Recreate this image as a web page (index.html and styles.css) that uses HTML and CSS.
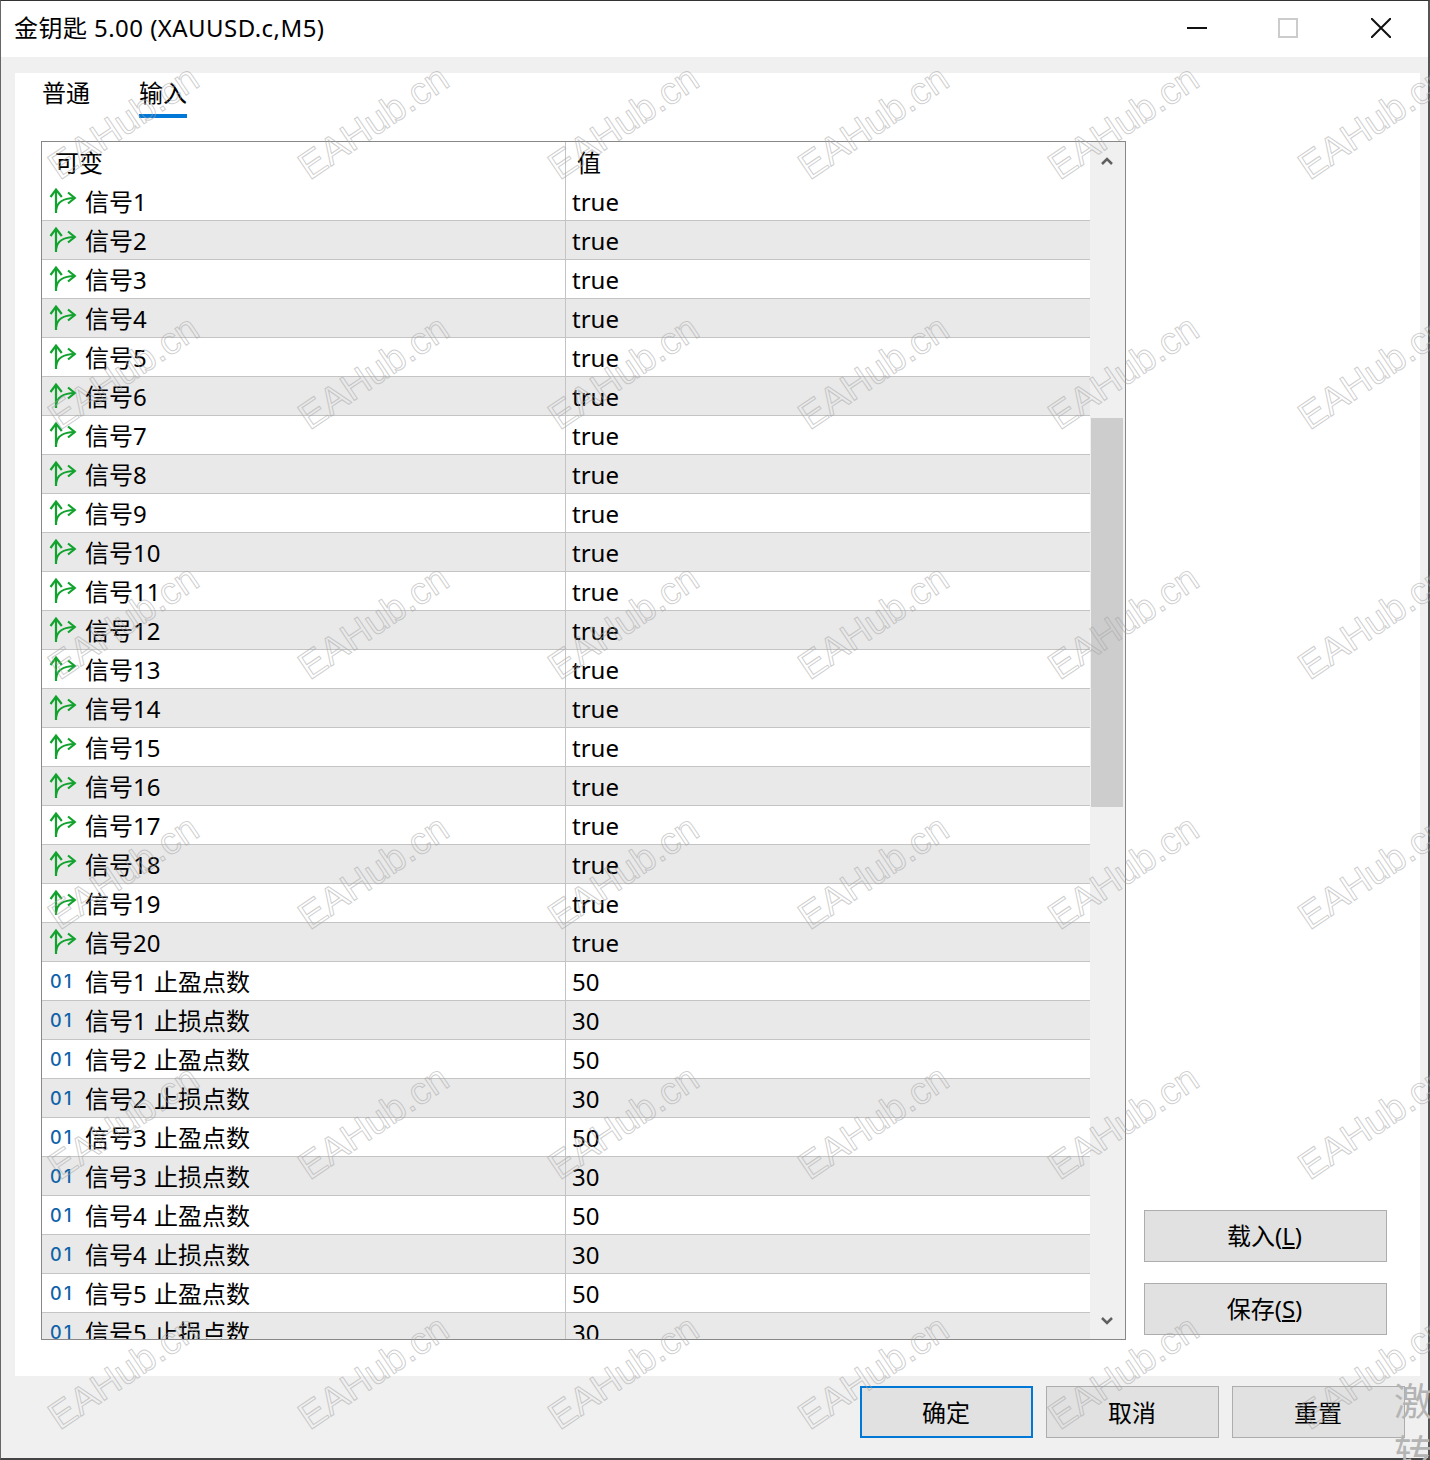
FILE: index.html
```html
<!DOCTYPE html>
<html lang="zh-CN">
<head>
<meta charset="utf-8">
<title>金钥匙 5.00 (XAUUSD.c,M5)</title>
<link rel="stylesheet" href="styles.css">
</head>
<body>
<svg class="defs" width="0" height="0" aria-hidden="true">
  <symbol id="branch" viewBox="0 0 30 38">
    <g fill="none" stroke="#12a32e" stroke-width="2.200">
      <path d="M8 30V7"/>
      <path d="M2.500 14 8 6.500l5.800 7.500"/>
      <path d="M8 27C9 20 15 15 26.500 15"/>
      <path d="M20 9.500 26.800 15 20 20.500"/>
    </g>
  </symbol>
</svg>
<div class="window">
  <header class="titlebar">
    <span class="title">金钥匙 5.00 (XAUUSD.c,M5)</span>
    <div class="controls">
      <span class="ctl ctl-min"></span>
      <span class="ctl ctl-max"></span>
      <svg class="ctl" viewBox="0 0 20 20"><path d="M0 0 20 20M20 0 0 20" stroke="#111" stroke-width="2" fill="none"/></svg>
    </div>
  </header>
  <main class="content">
    <section class="panel">
      <nav class="tabs">
        <span class="tab">普通</span>
        <span class="tab tab-active">输入</span>
      </nav>
      <div class="body">
        <div class="listbox">
          <div class="list">
            <div class="head"><span class="hcell hname">可变</span><span class="hcell hval">值</span></div>
            <div class="row"><div class="name"><svg class="ico"><use href="#branch"/></svg>信号1</div><div class="val">true</div></div>
            <div class="row alt"><div class="name"><svg class="ico"><use href="#branch"/></svg>信号2</div><div class="val">true</div></div>
            <div class="row"><div class="name"><svg class="ico"><use href="#branch"/></svg>信号3</div><div class="val">true</div></div>
            <div class="row alt"><div class="name"><svg class="ico"><use href="#branch"/></svg>信号4</div><div class="val">true</div></div>
            <div class="row"><div class="name"><svg class="ico"><use href="#branch"/></svg>信号5</div><div class="val">true</div></div>
            <div class="row alt"><div class="name"><svg class="ico"><use href="#branch"/></svg>信号6</div><div class="val">true</div></div>
            <div class="row"><div class="name"><svg class="ico"><use href="#branch"/></svg>信号7</div><div class="val">true</div></div>
            <div class="row alt"><div class="name"><svg class="ico"><use href="#branch"/></svg>信号8</div><div class="val">true</div></div>
            <div class="row"><div class="name"><svg class="ico"><use href="#branch"/></svg>信号9</div><div class="val">true</div></div>
            <div class="row alt"><div class="name"><svg class="ico"><use href="#branch"/></svg>信号10</div><div class="val">true</div></div>
            <div class="row"><div class="name"><svg class="ico"><use href="#branch"/></svg>信号11</div><div class="val">true</div></div>
            <div class="row alt"><div class="name"><svg class="ico"><use href="#branch"/></svg>信号12</div><div class="val">true</div></div>
            <div class="row"><div class="name"><svg class="ico"><use href="#branch"/></svg>信号13</div><div class="val">true</div></div>
            <div class="row alt"><div class="name"><svg class="ico"><use href="#branch"/></svg>信号14</div><div class="val">true</div></div>
            <div class="row"><div class="name"><svg class="ico"><use href="#branch"/></svg>信号15</div><div class="val">true</div></div>
            <div class="row alt"><div class="name"><svg class="ico"><use href="#branch"/></svg>信号16</div><div class="val">true</div></div>
            <div class="row"><div class="name"><svg class="ico"><use href="#branch"/></svg>信号17</div><div class="val">true</div></div>
            <div class="row alt"><div class="name"><svg class="ico"><use href="#branch"/></svg>信号18</div><div class="val">true</div></div>
            <div class="row"><div class="name"><svg class="ico"><use href="#branch"/></svg>信号19</div><div class="val">true</div></div>
            <div class="row alt"><div class="name"><svg class="ico"><use href="#branch"/></svg>信号20</div><div class="val">true</div></div>
            <div class="row"><div class="name"><span class="num">01</span>信号1 止盈点数</div><div class="val">50</div></div>
            <div class="row alt"><div class="name"><span class="num">01</span>信号1 止损点数</div><div class="val">30</div></div>
            <div class="row"><div class="name"><span class="num">01</span>信号2 止盈点数</div><div class="val">50</div></div>
            <div class="row alt"><div class="name"><span class="num">01</span>信号2 止损点数</div><div class="val">30</div></div>
            <div class="row"><div class="name"><span class="num">01</span>信号3 止盈点数</div><div class="val">50</div></div>
            <div class="row alt"><div class="name"><span class="num">01</span>信号3 止损点数</div><div class="val">30</div></div>
            <div class="row"><div class="name"><span class="num">01</span>信号4 止盈点数</div><div class="val">50</div></div>
            <div class="row alt"><div class="name"><span class="num">01</span>信号4 止损点数</div><div class="val">30</div></div>
            <div class="row"><div class="name"><span class="num">01</span>信号5 止盈点数</div><div class="val">50</div></div>
            <div class="row alt"><div class="name"><span class="num">01</span>信号5 止损点数</div><div class="val">30</div></div>
          </div>
          <div class="scrollbar">
            <svg class="arrow arrow-up" viewBox="0 0 12 8"><path d="M1 7 6 2l5 5" fill="none" stroke="#606060" stroke-width="2.500"/></svg>
            <div class="track"><div class="thumb"></div></div>
            <svg class="arrow arrow-down" viewBox="0 0 12 8"><path d="M1 1l5 5 5-5" fill="none" stroke="#606060" stroke-width="2.500"/></svg>
          </div>
        </div>
        <aside class="side">
          <button class="btn btn-side">载入(<u>L</u>)</button>
          <button class="btn btn-side">保存(<u>S</u>)</button>
        </aside>
      </div>
    </section>
    <footer class="footer">
      <button class="btn btn-foot btn-primary">确定</button>
      <button class="btn btn-foot">取消</button>
      <button class="btn btn-foot">重置</button>
    </footer>
  </main>
</div>
<div class="marks" aria-hidden="true">
  <span class="mark"><i>EAHub.cn</i></span><span class="mark"><i>EAHub.cn</i></span><span class="mark"><i>EAHub.cn</i></span><span class="mark"><i>EAHub.cn</i></span><span class="mark"><i>EAHub.cn</i></span><span class="mark"><i>EAHub.cn</i></span>
  <span class="mark"><i>EAHub.cn</i></span><span class="mark"><i>EAHub.cn</i></span><span class="mark"><i>EAHub.cn</i></span><span class="mark"><i>EAHub.cn</i></span><span class="mark"><i>EAHub.cn</i></span><span class="mark"><i>EAHub.cn</i></span>
  <span class="mark"><i>EAHub.cn</i></span><span class="mark"><i>EAHub.cn</i></span><span class="mark"><i>EAHub.cn</i></span><span class="mark"><i>EAHub.cn</i></span><span class="mark"><i>EAHub.cn</i></span><span class="mark"><i>EAHub.cn</i></span>
  <span class="mark"><i>EAHub.cn</i></span><span class="mark"><i>EAHub.cn</i></span><span class="mark"><i>EAHub.cn</i></span><span class="mark"><i>EAHub.cn</i></span><span class="mark"><i>EAHub.cn</i></span><span class="mark"><i>EAHub.cn</i></span>
  <span class="mark"><i>EAHub.cn</i></span><span class="mark"><i>EAHub.cn</i></span><span class="mark"><i>EAHub.cn</i></span><span class="mark"><i>EAHub.cn</i></span><span class="mark"><i>EAHub.cn</i></span><span class="mark"><i>EAHub.cn</i></span>
  <span class="mark"><i>EAHub.cn</i></span><span class="mark"><i>EAHub.cn</i></span><span class="mark"><i>EAHub.cn</i></span><span class="mark"><i>EAHub.cn</i></span><span class="mark"><i>EAHub.cn</i></span><span class="mark"><i>EAHub.cn</i></span>
</div>
<div class="stamp" aria-hidden="true">激<br>转</div>
</body>
</html>
```

FILE: styles.css
```css
* { box-sizing: border-box; }
html, body { margin: 0; height: 1460px; overflow: hidden; background: #f0f0f0; }
body {
  position: relative;
  font-family: "Noto Sans", "Noto Sans CJK SC", sans-serif;
  font-size: 24px;
  color: #000;
}
.defs { position: absolute; }

.window {
  width: 1430px;
  height: 1460px;
  display: flex;
  flex-direction: column;
  border-style: solid;
  border-color: #333 #555 #444 #666;
  border-width: 1px 2px 2px 1px;
  background: #f0f0f0;
}

.titlebar {
  flex: 0 0 56px;
  background: #fff;
  display: flex;
  align-items: center;
  justify-content: space-between;
  padding: 0 0 2px 13px;
}
.title { line-height: 54px; letter-spacing: 0.45px; }
.controls {
  display: flex;
  align-items: center;
  padding-right: 37px;
}
.ctl { display: block; width: 20px; height: 20px; }
.ctl-min { position: relative; margin-right: 71px; }
.ctl-min::after {
  content: "";
  position: absolute;
  left: 0;
  top: 9px;
  width: 20px;
  height: 2px;
  background: #111;
}
.ctl-max { border: 2px solid #ccc; margin-right: 73px; }

.content {
  flex: 1;
  display: flex;
  flex-direction: column;
  padding: 16px 8px 0 14px;
  min-height: 0;
}
.panel {
  flex: 0 0 1303px;
  background: #fff;
  padding-left: 26px;
  padding-right: 32px;
  display: flex;
  flex-direction: column;
}
.tabs { display: flex; gap: 49px; height: 45px; padding-left: 1px; }
.tab { height: 45px; line-height: 40px; }
.tab-active { border-bottom: 4px solid #0078d7; }

.body { display: flex; gap: 18px; margin-top: 23px; }
.listbox {
  width: 1085px;
  height: 1199px;
  border: 1px solid #888;
  display: flex;
  overflow: hidden;
  background: #fff;
}
.list { flex: 0 0 1048px; overflow: hidden; }
.head { display: grid; grid-template-columns: 524px 1fr; height: 40px; }
.hcell { line-height: 42px; }
.hname { padding-left: 13px; border-right: 1px solid #c4c4c4; }
.hval { padding-left: 11px; }
.row {
  display: grid;
  grid-template-columns: 524px 1fr;
  height: 39px;
  border-bottom: 1px solid #c4c4c4;
  line-height: 39px;
}
.alt { background: #e9e9e9; }
.name {
  display: flex;
  align-items: flex-start;
  border-right: 1px solid #c4c4c4;
  padding-left: 6px;
  white-space: pre;
  word-spacing: 1px;
}
.val { padding-left: 6px; }
.ico { width: 30px; height: 38px; flex: none; margin: 1px 7px 0 0; }
.num {
  flex: none;
  width: 30px;
  margin-right: 7px;
  padding-left: 2px;
  font-family: "Inter", sans-serif;
  font-weight: 500;
  font-size: 18px;
  letter-spacing: 2.500px;
  line-height: 39px;
  color: #0f63a8;
}

.scrollbar {
  flex: 1;
  background: #f0f0f0;
  display: flex;
  flex-direction: column;
  align-items: center;
}
.arrow { flex: none; width: 12px; height: 8px; margin-right: 1px; }
.arrow-up { margin-top: 15px; margin-bottom: 15px; }
.arrow-down { margin-top: 15px; margin-bottom: 14px; }
.track { flex: 1; align-self: stretch; padding: 238px 2px 0 1px; }
.thumb { height: 389px; background: #cdcdcd; }

.side {
  flex: 1;
  display: flex;
  flex-direction: column;
  justify-content: flex-end;
  gap: 21px;
  padding-bottom: 5px;
}
.btn {
  font: inherit;
  color: #000;
  background: #e1e1e1;
  border: 1px solid #adadad;
  height: 52px;
}
.btn-side { width: 243px; padding: 0 2px 3px 0; }
.footer {
  display: flex;
  justify-content: flex-end;
  gap: 13px;
  margin-top: 10px;
  padding-right: 15px;
}
.btn-foot { width: 173px; padding: 0 1px 1px 0; }
.btn-primary { border: 2px solid #0078d7; }

.marks {
  position: absolute;
  left: -1px;
  top: 0;
  width: 1431px;
  height: 1460px;
  overflow: hidden;
  display: grid;
  grid-template-columns: repeat(6, 250px);
  grid-auto-rows: 250px;
  pointer-events: none;
}
.mark {
  display: flex;
  align-items: center;
  justify-content: center;
  padding-bottom: 6px;
}
.mark i {
  font-family: "Liberation Sans", sans-serif;
  font-style: normal;
  font-size: 38px;
  white-space: nowrap;
  color: transparent;
  -webkit-text-stroke: 1px rgba(165, 165, 165, 0.55);
  transform: rotate(-34deg);
}
.stamp {
  position: absolute;
  left: 1394px;
  top: 1374px;
  font-size: 38px;
  line-height: 52px;
  color: #b4b4b4;
  pointer-events: none;
}
```
